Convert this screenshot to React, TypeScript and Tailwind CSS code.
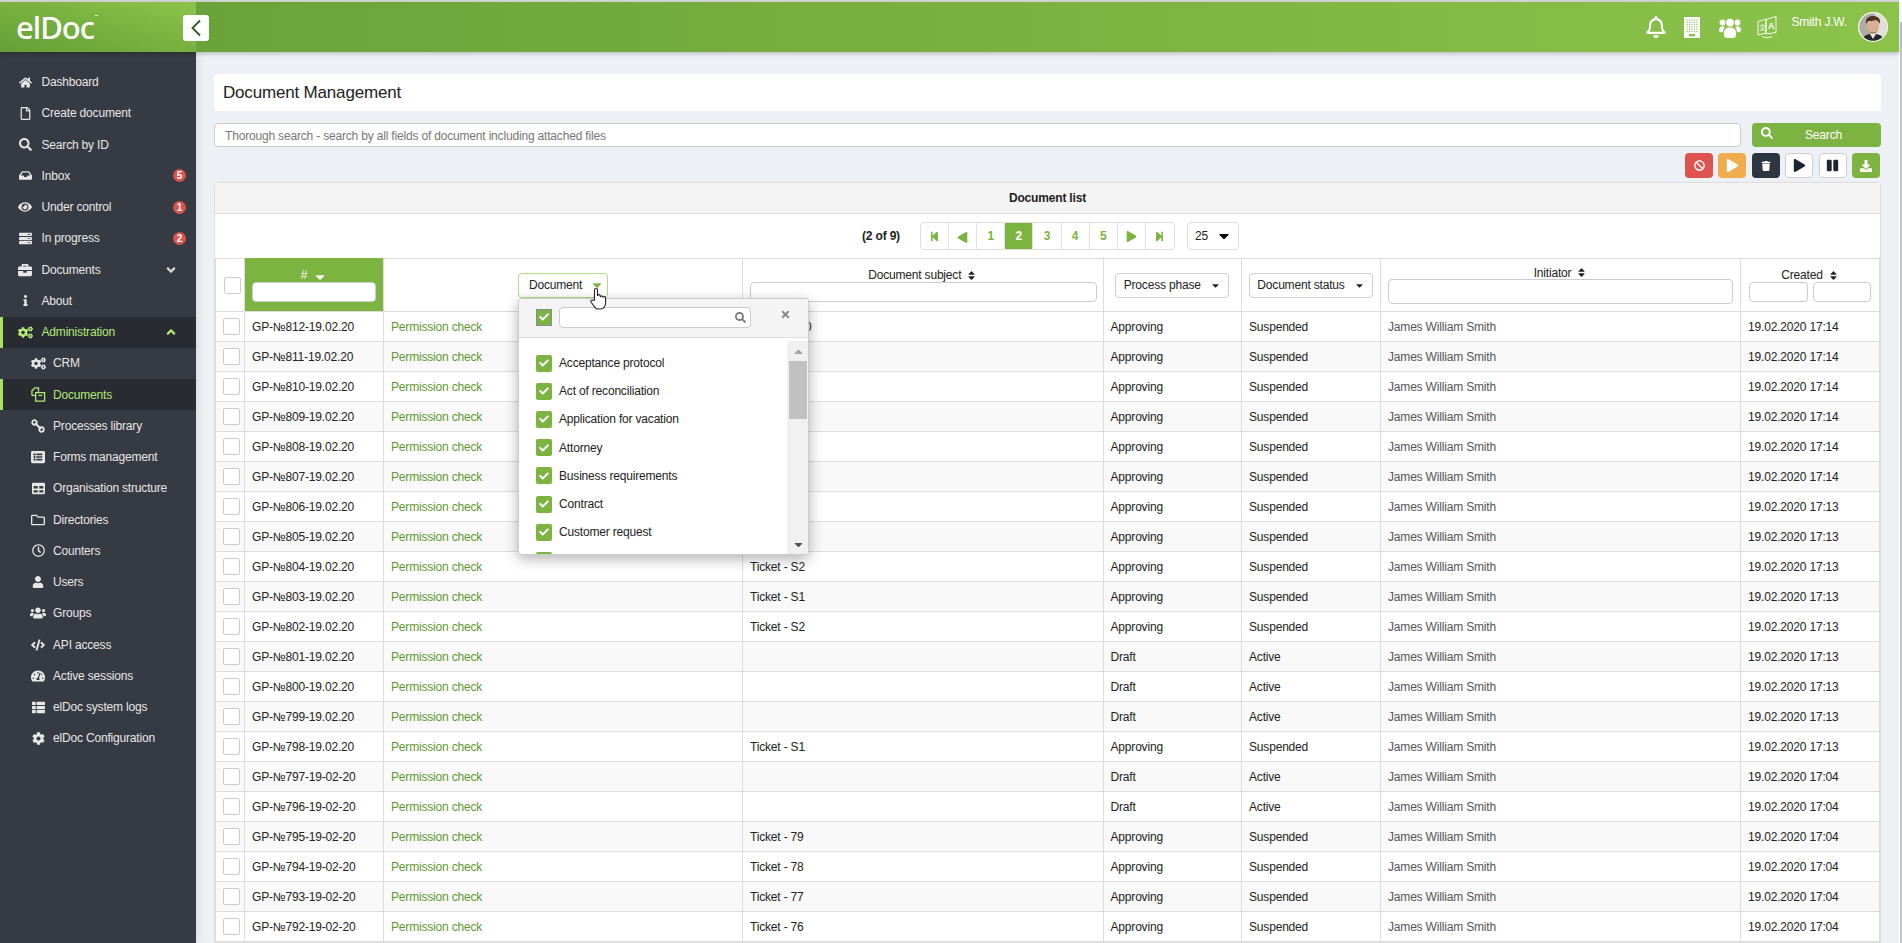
import type { ReactNode } from "react";
import {
  FaHome,
  FaRegFile,
  FaSearch,
  FaInbox,
  FaEye,
  FaServer,
  FaBriefcase,
  FaInfo,
  FaCogs,
  FaTable,
  FaRegFolder,
  FaRegClock,
  FaUser,
  FaUsers,
  FaCode,
  FaTachometerAlt,
  FaThList,
  FaCog,
  FaAngleDown,
  FaAngleUp,
  FaBan,
  FaPlay,
  FaTrash,
  FaPause,
  FaDownload,
  FaStepBackward,
  FaStepForward,
  FaCheck,
  FaTimes,
  FaCaretDown,
  FaCaretUp,
  FaSort,
  FaRegBell,
  FaListAlt,
} from "react-icons/fa";

function DocsIcon() {
  return (
    <svg width="15" height="15" viewBox="0 0 16 16" fill="none" stroke="currentColor" strokeWidth="1.4">
      <path d="M1 9V4l3-3h4v4" />
      <path d="M5 6h9.5v9H5z" />
      <path d="M1 9h4" />
      <path d="M8 9h4" />
    </svg>
  );
}

function LinkIcon() {
  return (
    <svg width="14" height="14" viewBox="0 0 14 14" fill="currentColor">
      <path d="M4 4l6 6" stroke="currentColor" strokeWidth="2" />
      <circle cx="3.5" cy="3.5" r="2.3" fill="none" stroke="currentColor" strokeWidth="1.7" />
      <circle cx="10.5" cy="10.5" r="2.3" fill="none" stroke="currentColor" strokeWidth="1.7" />
    </svg>
  );
}

function BuildingIcon() {
  const dots = [];
  for (let r = 0; r < 6; r++) {
    for (let c = 0; c < 5; c++) {
      dots.push(<rect key={`${r}-${c}`} x={2.6 + c * 2.4} y={2.5 + r * 2.3} width="1.1" height="1.1" fill="#87bf49" />);
    }
  }
  return (
    <svg width="16" height="21" viewBox="0 0 16 21">
      <rect width="16" height="21" fill="white" />
      {dots}
      <rect x="5" y="17" width="6" height="2.4" fill="#87bf49" />
    </svg>
  );
}

function GroupIcon() {
  return (
    <svg width="22" height="21" viewBox="0 0 22 21" fill="white">
      <circle cx="3.6" cy="5.6" r="3" />
      <circle cx="18.4" cy="5.6" r="3" />
      <circle cx="11" cy="5.6" r="4.4" stroke="#87bf49" strokeWidth="0.8" />
      <path d="M0 13c0-2.300 1.500-3.800 3.600-3.800 1 0 1.800.300 2.400.800-1.300 1.300-2 3-2 5.200H2c-1.200 0-2-.800-2-2.200z" />
      <path d="M22 13c0-2.300-1.500-3.800-3.600-3.800-1 0-1.800.300-2.400.800 1.300 1.300 2 3 2 5.200h2c1.200 0 2-.800 2-2.200z" />
      <path d="M5 15.500c0-3 2.400-5 6-5s6 2 6 5V18c0 2-1.500 3-3 3H8c-1.500 0-3-1-3-3z" />
    </svg>
  );
}

function LanguageIcon() {
  return (
    <svg width="20" height="22" viewBox="0 0 20 22" fill="none" stroke="white" strokeWidth="0.9">
      <path d="M1 5.500l8-2.500v14l-8 2z" />
      <path d="M9 3.500l10-3v16l-10 1.500z" />
      <path d="M5 20.500c3 1.500 7 1.500 10 0" />
      <text x="2.200" y="14" fontSize="6.500" fill="white" stroke="none" fontFamily="'Noto Sans CJK SC', sans-serif">文</text>
      <text x="11" y="13" fontSize="9" fontWeight="700" fill="white" stroke="none" fontFamily="'Liberation Sans', sans-serif">A</text>
    </svg>
  );
}

function HandCursor() {
  return (
    <svg width="17" height="23" viewBox="0 0 17 23" fill="white" stroke="#222" strokeWidth="1.1">
      <path d="M4.500 13V3a1.500 1.500 0 0 1 3 0v6a1.400 1.400 0 0 1 2.800 0v1a1.400 1.400 0 0 1 2.700 0v.8a1.300 1.300 0 0 1 2.600 0V16c0 3-2 6-5 6H8c-2 0-3-1-4-3l-3-4c-.8-1.200.8-2.600 1.900-1.600z" />
    </svg>
  );
}

function Avatar() {
  return (
    <svg width="30" height="30" viewBox="0 0 30 30">
      <defs>
        <clipPath id="av">
          <circle cx="15" cy="15" r="13.800" />
        </clipPath>
      </defs>
      <circle cx="15" cy="15" r="15" fill="white" />
      <g clipPath="url(#av)">
        <rect width="30" height="30" fill="#b0aca4" />
        <rect x="17" width="13" height="30" fill="#e2dfd9" />
        <path d="M3 30c1-6 6-8 12-8s11 2 12 8z" fill="#26282c" />
        <path d="M12 22l3 5 3-5z" fill="#ece8e2" />
        <ellipse cx="15" cy="14" rx="6" ry="8" fill="#d9b096" />
        <path d="M8 12c-1-6 3-8 7-8s8 2 7 8c-1-2-2-3-4-4-3 1-7 1-8 1-1 1-1 2-2 3z" fill="#4b3324" />
        <path d="M11 19c2 2 6 2 8 0-1 3-7 3-8 0z" fill="#6b4d3c" />
      </g>
    </svg>
  );
}

function Badge({ n }: { n: number }) {
  return (
    <span className="w-[13px] h-[13px] rounded-full bg-[#d9534f] text-white text-[10px] font-bold flex items-center justify-center">
      {n}
    </span>
  );
}

function NavItem({
  icon,
  label,
  badge,
  chevron,
  active,
  sub,
}: {
  icon: ReactNode;
  label: string;
  badge?: number;
  chevron?: "up" | "down";
  active?: boolean;
  sub?: boolean;
}) {
  return (
    <div
      className={`h-[31.25px] flex items-center pr-[10px] border-l-[3px] ${
        active ? "bg-[#282b31] border-[#a5e065] text-[#b5e878]" : "border-transparent text-[#e6e7e9]"
      } ${sub ? "pl-[27px]" : "pl-[14px]"}`}
    >
      <span className="w-[16px] flex justify-center">{icon}</span>
      <span className={`flex-1 text-[12px] ${sub ? "ml-[7px]" : "ml-[8.5px]"}`}>{label}</span>
      {badge ? <Badge n={badge} /> : null}
      {chevron === "down" ? <FaAngleDown size={14} className="mr-[8px] text-[#d8d8d8]" /> : null}
      {chevron === "up" ? <FaAngleUp size={14} className="mr-[8px]" /> : null}
    </div>
  );
}

function Sidebar() {
  return (
    <aside className="w-[196px] shrink-0 bg-[#363a42] pt-[14.5px] shadow-[3px_0_6px_rgba(0,0,0,0.08)]">
      <NavItem icon={<FaHome size={13} />} label="Dashboard" />
      <NavItem icon={<FaRegFile size={13} />} label="Create document" />
      <NavItem icon={<FaSearch size={13} />} label="Search by ID" />
      <NavItem icon={<FaInbox size={13} />} label="Inbox" badge={5} />
      <NavItem icon={<FaEye size={14} />} label="Under control" badge={1} />
      <NavItem icon={<FaServer size={13} />} label="In progress" badge={2} />
      <NavItem icon={<FaBriefcase size={14} />} label="Documents" chevron="down" />
      <NavItem icon={<FaInfo size={11} />} label="About" />
      <NavItem icon={<FaCogs size={15} />} label="Administration" chevron="up" active />
      <NavItem icon={<FaCogs size={15} />} label="CRM" sub />
      <NavItem icon={<DocsIcon />} label="Documents" sub active />
      <NavItem icon={<LinkIcon />} label="Processes library" sub />
      <NavItem icon={<FaListAlt size={14} />} label="Forms management" sub />
      <NavItem icon={<FaTable size={13} />} label="Organisation structure" sub />
      <NavItem icon={<FaRegFolder size={14} />} label="Directories" sub />
      <NavItem icon={<FaRegClock size={13} />} label="Counters" sub />
      <NavItem icon={<FaUser size={12} />} label="Users" sub />
      <NavItem icon={<FaUsers size={16} />} label="Groups" sub />
      <NavItem icon={<FaCode size={14} />} label="API access" sub />
      <NavItem icon={<FaTachometerAlt size={14} />} label="Active sessions" sub />
      <NavItem icon={<FaThList size={13} />} label="elDoc system logs" sub />
      <NavItem icon={<FaCog size={13} />} label="elDoc Configuration" sub />
    </aside>
  );
}

function Header() {
  return (
    <header className="h-[50px] flex shrink-0 relative z-10 shadow-[0_2px_4px_rgba(0,0,0,0.2)]">
      <div className="w-[196px] shrink-0 bg-gradient-to-tr from-[#659e35] to-[#8cc44b] flex items-center relative">
        <span className="ml-[16px] text-white text-[31px] leading-none font-medium font-['Noto_Sans',sans-serif] tracking-[-1px]">
          elDoc
        </span>
        <span className="w-[3px] h-px bg-white/80 mt-[-24px] ml-px" />
      </div>
      <div className="flex-1 flex items-center bg-gradient-to-r from-[#6aa339] to-[#8bc34a] relative">
        <button className="absolute left-[-13px] top-[13px] w-[26px] h-[26px] bg-white rounded-[3px] flex items-center justify-center">
          <svg width="12" height="18" viewBox="0 0 12 18" fill="none" stroke="#2f5a20" strokeWidth="1.8">
            <path d="M10 1.5L2.5 9l7.5 7.5" />
          </svg>
        </button>
        <div className="ml-auto flex items-center text-white">
          <FaRegBell size={22} className="mr-[17px]" />
          <span className="mr-[19px] flex">
            <BuildingIcon />
          </span>
          <span className="mr-[16px] flex">
            <GroupIcon />
          </span>
          <span className="mr-[14px] flex">
            <LanguageIcon />
          </span>
          <span className="text-[12px] mb-[10px] mr-[11px]">Smith J.W.</span>
          <span className="mr-[11px] flex">
            <Avatar />
          </span>
        </div>
      </div>
    </header>
  );
}

const inputClass = "bg-white border border-[#ccc] rounded-[4px]";

function ActionButton({ className, children }: { className: string; children: ReactNode }) {
  return (
    <button className={`w-[28px] h-[25px] rounded-[4px] flex items-center justify-center ${className}`}>
      {children}
    </button>
  );
}

function PageCell({ children, current, last }: { children: ReactNode; current?: boolean; last?: boolean }) {
  return (
    <span
      className={`w-[28.2px] h-full flex items-center justify-center font-bold ${last ? "" : "border-r border-[#e3e3e3]"} ${
        current ? "bg-[#7db340] text-white" : "text-[#7db340]"
      }`}
    >
      {children}
    </span>
  );
}

function SortHead({ label }: { label: string }) {
  return (
    <span className="flex h-[13px] items-center justify-center gap-[5px] font-normal">
      {label}
      <FaSort size={11} />
    </span>
  );
}

function DropButton({ label, w }: { label: string; w: string }) {
  return (
    <div className={`${w} h-[25px] ${inputClass} flex items-center justify-center gap-[9px] mx-auto font-normal`}>
      {label}
      <FaCaretDown size={11} className="text-[#222]" />
    </div>
  );
}

const popupItems = [
  "Acceptance protocol",
  "Act of reconciliation",
  "Application for vacation",
  "Attorney",
  "Business requirements",
  "Contract",
  "Customer request",
];

function CheckMark({ gray }: { gray?: boolean }) {
  return (
    <span
      className={`w-[16px] h-[17px] shrink-0 bg-[#7db340] flex items-center justify-center ${
        gray ? "border border-[#8a8a8a]" : "rounded-[2px]"
      }`}
    >
      <FaCheck size={10} className="text-white" />
    </span>
  );
}

function DocumentPopup() {
  return (
    <div className="absolute left-[134px] top-[39px] w-[291px] h-[257px] bg-white border border-[#ccc] rounded-[3px] shadow-[0_4px_14px_rgba(0,0,0,0.3)] overflow-hidden text-left font-normal">
      <div className="h-[39px] bg-[#f4f4f4] border-b border-[#ddd] flex items-center pl-[17px] pb-[2px]">
        <CheckMark gray />
        <div className={`ml-[7px] w-[192px] h-[21px] ${inputClass} flex items-center justify-end pr-[4px]`}>
          <FaSearch size={11} className="text-[#777]" />
        </div>
        <FaTimes size={11} className="ml-[29px] mb-[6px] text-[#888]" />
      </div>
      <div className="flex h-[217px]">
        <div className="flex-1 pt-[11px] pl-[17px] overflow-hidden">
          {popupItems.map((item) => (
            <div key={item} className="h-[28.2px] flex items-center gap-[7px] text-[#222]">
              <CheckMark />
              {item}
            </div>
          ))}
          <div className="h-[28px] flex items-center">
            <CheckMark />
          </div>
        </div>
        <div className="w-[21px] mt-[3px] pr-px bg-[#f1f1f1] flex flex-col items-end">
          <span className="w-[18px] flex justify-center mt-[4px] text-[#a3a3a3]">
            <FaCaretUp size={13} />
          </span>
          <span className="w-[18px] h-[58px] bg-[#c1c1c1] mt-[3px]" />
          <span className="w-[18px] flex justify-center mt-auto mb-[4px] text-[#505050]">
            <FaCaretDown size={13} />
          </span>
        </div>
      </div>
    </div>
  );
}

type Row = { id: string; subject: string; draft?: boolean; time: string };

function makeRow(n: number, subject: string, time: string, draft?: boolean): Row {
  const date = n > 797 ? "19.02.20" : "19-02-20";
  return { id: `GP-№${n}-${date}`, subject, time, draft };
}

const rows: Row[] = [
  makeRow(812, "Ticket - S10", "19.02.2020 17:14"),
  makeRow(811, "Ticket - S9", "19.02.2020 17:14"),
  makeRow(810, "Ticket - S8", "19.02.2020 17:14"),
  makeRow(809, "Ticket - S7", "19.02.2020 17:14"),
  makeRow(808, "Ticket - S6", "19.02.2020 17:14"),
  makeRow(807, "Ticket - S5", "19.02.2020 17:14"),
  makeRow(806, "Ticket - S4", "19.02.2020 17:13"),
  makeRow(805, "Ticket - S3", "19.02.2020 17:13"),
  makeRow(804, "Ticket - S2", "19.02.2020 17:13"),
  makeRow(803, "Ticket - S1", "19.02.2020 17:13"),
  makeRow(802, "Ticket - S2", "19.02.2020 17:13"),
  makeRow(801, "", "19.02.2020 17:13", true),
  makeRow(800, "", "19.02.2020 17:13", true),
  makeRow(799, "", "19.02.2020 17:13", true),
  makeRow(798, "Ticket - S1", "19.02.2020 17:13"),
  makeRow(797, "", "19.02.2020 17:04", true),
  makeRow(796, "", "19.02.2020 17:04", true),
  makeRow(795, "Ticket - 79", "19.02.2020 17:04"),
  makeRow(794, "Ticket - 78", "19.02.2020 17:04"),
  makeRow(793, "Ticket - 77", "19.02.2020 17:04"),
  makeRow(792, "Ticket - 76", "19.02.2020 17:04"),
];

const td = "border border-[#ddd] px-[7px] whitespace-nowrap overflow-hidden";
const th = "border border-[#ddd] p-0 align-middle text-center";

function DocumentTable() {
  return (
    <table className="w-full table-fixed border-collapse text-[12px] text-[#222]">
      <colgroup>
        <col className="w-[29px]" />
        <col className="w-[139px]" />
        <col className="w-[359px]" />
        <col className="w-[360.5px]" />
        <col className="w-[138.5px]" />
        <col className="w-[139px]" />
        <col className="w-[360px]" />
        <col />
      </colgroup>
      <thead>
        <tr className="h-[53px]">
          <th className={th}>
            <span className="block w-[17px] h-[17px] ml-[8px] bg-white border border-[#ccc] rounded-[2px]" />
          </th>
          <th className={`${th} bg-[#7db340] text-white border-t-[#7db340]`}>
            <span className="flex items-center justify-center gap-[6px] h-[13px] font-normal">
              #
              <FaCaretDown size={14} className="mt-[3px]" />
            </span>
            <div className={`${inputClass} h-[20px] mx-[7px]`} />
          </th>
          <th className={`${th} relative z-20`}>
            <div className="w-[90px] h-[25px] ml-[134px] bg-white border border-[#b5da86] rounded-[4px] flex items-center gap-[8px] pl-[10px] font-normal">
              Document
              <FaCaretDown size={14} className="text-[#7db340]" />
            </div>
            <DocumentPopup />
            <span className="absolute left-[206px] top-[28px] z-30 flex">
              <HandCursor />
            </span>
          </th>
          <th className={th}>
            <SortHead label="Document subject" />
            <div className={`${inputClass} h-[20px] ml-[7px] mr-[6px]`} />
          </th>
          <th className={th}>
            <DropButton label="Process phase" w="w-[114px]" />
          </th>
          <th className={th}>
            <DropButton label="Document status" w="w-[124px]" />
          </th>
          <th className={th}>
            <SortHead label="Initiator" />
            <div className={`${inputClass} h-[25px] mx-[7px]`} />
          </th>
          <th className={th}>
            <SortHead label="Created" />
            <div className="flex gap-[5px] mx-[8px]">
              <div className={`${inputClass} h-[20px] flex-1`} />
              <div className={`${inputClass} h-[20px] flex-1`} />
            </div>
          </th>
        </tr>
      </thead>
      <tbody>
        {rows.map((row, i) => (
          <tr key={row.id} className={`h-[30px] ${i % 2 ? "bg-[#f9f9f9]" : "bg-white"}`}>
            <td className={`${td} !px-0`}>
              <span className="block w-[17px] h-[17px] ml-[7px] bg-white border border-[#ccc] rounded-[2px]" />
            </td>
            <td className={td}>{row.id}</td>
            <td className={`${td} text-[#5f9733]`}>Permission check</td>
            <td className={td}>{row.subject}</td>
            <td className={td}>{row.draft ? "Draft" : "Approving"}</td>
            <td className={td}>{row.draft ? "Active" : "Suspended"}</td>
            <td className={`${td} text-[#555]`}>James William Smith</td>
            <td className={td}>{row.time}</td>
          </tr>
        ))}
      </tbody>
    </table>
  );
}

export default function App() {
  return (
    <div className="h-[943px] overflow-hidden flex bg-white font-['Liberation_Sans',Arial,sans-serif] tracking-[-0.18px] text-[12px] text-[#222]">
      <div className="flex-1 min-w-0 flex flex-col">
        <div className="h-[2px] bg-[#d4d4d4] shrink-0" />
        <Header />
        <div className="flex-1 min-h-0 flex bg-[#edf0f5]">
          <Sidebar />
          <main className="flex-1 min-w-0 px-[18px] pt-[22px]">
            <div className="h-[37px] bg-white rounded-[4px] flex items-center pl-[9px] text-[17px] text-[#222]">
              Document Management
            </div>
            <div className="flex gap-[11px] mt-[12px]">
              <div className={`flex-1 h-[24px] ${inputClass} flex items-center pl-[10px] pt-px text-[#777]`}>
                Thorough search - search by all fields of document including attached files
              </div>
              <button className="w-[129px] h-[24px] bg-[#7db340] rounded-[4px] text-white flex items-center relative">
                <FaSearch size={12} className="absolute left-[9px] top-[4px]" />
                <span className="w-full pl-[14px] text-center">Search</span>
              </button>
            </div>
            <div className="flex justify-end gap-[5.4px] mt-[6px] pr-px">
              <ActionButton className="bg-[#dc5350] text-white">
                <FaBan size={11} />
              </ActionButton>
              <ActionButton className="bg-[#f0ad4e] text-white">
                <FaPlay size={13} />
              </ActionButton>
              <ActionButton className="bg-[#2c3540] text-white">
                <FaTrash size={10} />
              </ActionButton>
              <ActionButton className="bg-white border border-[#ccc] text-[#1c2530]">
                <FaPlay size={13} />
              </ActionButton>
              <ActionButton className="bg-white border border-[#ccc] text-[#1c2530]">
                <FaPause size={13} />
              </ActionButton>
              <ActionButton className="bg-[#7db340] text-white">
                <FaDownload size={12} />
              </ActionButton>
            </div>
            <section className="mt-[4px] border border-[#ddd] rounded-t-[4px] bg-white">
              <div className="h-[31px] bg-[#f4f4f4] border-b border-[#ddd] flex items-center justify-center font-bold">
                Document list
              </div>
              <div className="h-[44px] flex items-center justify-center pl-[6px]">
                <span className="mr-[20px] font-bold">(2 of 9)</span>
                <div className="h-[28px] w-[255px] flex border border-[#ddd] rounded-[4px] overflow-hidden">
                  <PageCell>
                    <FaStepBackward size={11} />
                  </PageCell>
                  <PageCell>
                    <FaPlay size={11} className="rotate-180 mt-[2px]" />
                  </PageCell>
                  <PageCell>1</PageCell>
                  <PageCell current>2</PageCell>
                  <PageCell>3</PageCell>
                  <PageCell>4</PageCell>
                  <PageCell>5</PageCell>
                  <PageCell>
                    <FaPlay size={11} />
                  </PageCell>
                  <PageCell last>
                    <FaStepForward size={11} />
                  </PageCell>
                </div>
                <div className="ml-[12px] w-[52px] h-[28px] border border-[#ddd] rounded-[4px] flex items-center justify-between pl-[7px] pr-[6px]">
                  25
                  <FaCaretDown size={16} className="text-black" />
                </div>
              </div>
              <DocumentTable />
            </section>
          </main>
        </div>
      </div>
      <div className="w-[3px] shrink-0 flex flex-col">
        <div className="h-[22px] bg-white" />
        <div className="flex-1 bg-[#c4c4c4] ml-px" />
      </div>
    </div>
  );
}
